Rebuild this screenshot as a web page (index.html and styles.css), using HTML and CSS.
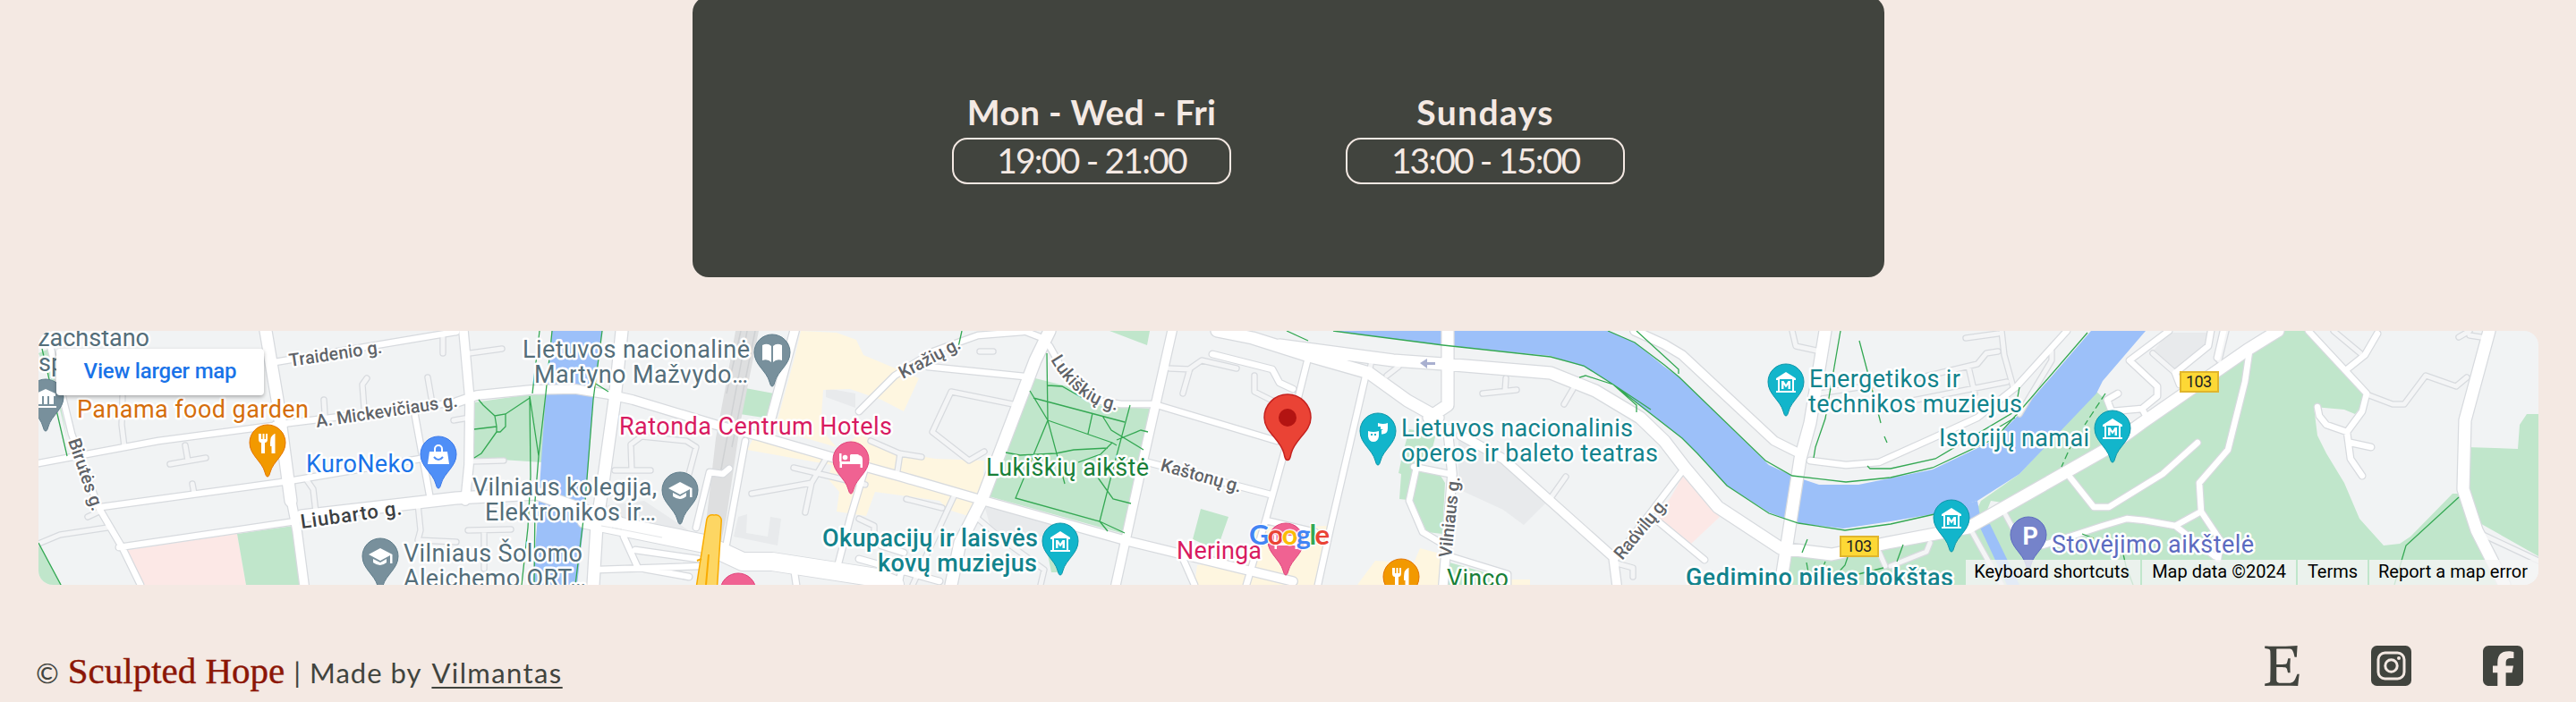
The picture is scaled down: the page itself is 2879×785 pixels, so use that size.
FILE: index.html
```html
<!DOCTYPE html>
<html lang="en">
<head>
<meta charset="utf-8">
<title>Sculpted Hope</title>
<link rel="stylesheet" href="styles.css">
</head>
<body>
<main class="page">
  <section class="hours">
    <div class="slot">
      <h3 class="slot-day day-week">Mon - Wed - Fri</h3>
      <p class="slot-time time-week">19:00 - 21:00</p>
    </div>
    <div class="slot">
      <h3 class="slot-day day-sun">Sundays</h3>
      <p class="slot-time time-sun">13:00 - 15:00</p>
    </div>
  </section>

  <section class="map">
    <svg class="map-canvas" viewBox="43 370 2794 284" width="2794" height="284">
      <defs>
        <path id="pin" d="M0 38C-1.6 38-2 36-3 33C-6 21-20 14-20 0A20 20 0 1 1 20 0C20 14 6 21 3 33C2 36 1.6 38 0 38Z"/>
        <g id="fork"><path d="M-10-10v6q0 4 3 4v12h4v-12q3 0 3-4v-6h-2v6h-1.500v-6h-2v6h-1.500v-6zM8-10q-5 2-5 10v4h1.500v8h4v-22z"/></g>
        <g id="cap"><path d="M0-9L-13-2L0 5L11-1V8h2.500V-2zM-8 3v4q8 6 15 0v-4l-7 4z"/></g>
        <g id="bed"><path d="M-13-7h2.500v9h21V-2q0-3-3-4h-8v6h-4h9v2h-17v-9v16h2.500v-4h20.500v4h2.500v-9q0-5-5-5h-9v7h-12z"/><circle cx="-6.500" cy="-2.500" r="2.800"/></g>
        <g id="museum"><path d="M-11-4L0-11L11-4v2h-2v12h2v2h-22v-2h2v-12h-2zM-7-3v13h14v-13z" fill-rule="evenodd"/><path d="M-5 8v-9h2.500l2.500 4l2.500-4h2.500v9h-2.500v-5l-2.500 3.500l-2.500-3.500v5z"/></g>
        <g id="w5">
          <path d="M137 443L136 475L139 500M207 498L210 515M190 519L230 512M215 541L217 552M410 423L405 430L407 457M362 447L363 463M478 422L482 445M495 377V395M343 537L350 547L353 573M467 563L470 593L467 604L510 606M43 608L67 598L120 590M98 578L113 571M525 395L561 390M507 470L525 467M527 516L563 515M523 593L571 592M541 593V636M706 526L705 497L717 488L767 493L778 500L770 530M687 526H727M840 552L907 540L923 513M907 540L900 573M887 523L967 542M1132 452L1063 438L1042 483L1083 515L1100 505M973 493L1005 507L1030 511M1006 507L1003 527M1013 558L1053 568M1067 553L1020 654M960 580L977 588V600M1093 580L1120 603L1167 637L1163 654M1382 412L1343 403L1330 412L1322 440M1307 412L1330 413M1402 420V438L1440 457M1530 417L1533 403L1560 403M1550 420L1563 410M1683 423L1682 437M1657 440L1695 436M1758 435L1748 452M1750 533L1733 557M1807 630L1825 635V645M2003 370L2007 387L2030 392M2197 378L2233 373M2237 370L2240 397L2250 433M2033 440L2143 423L2210 407L2220 395L2233 393M2200 410L2207 440M2127 450L2243 427M2293 393V403L2257 463M2113 633L2153 617L2157 607M2100 617L2107 633M2240 573L2253 597M2203 593L2237 654M2406 395L2431 417M2488 370L2480 403M2645 441L2674 452H2687L2711 420L2745 432L2757 422M2773 597L2837 627M2608 370L2638 395M2748 377L2760 370M2760 375L2773 377M1095 393H1110"/>
        </g>
        <g id="w7">
          <path d="M307 405L510 371M307 475L510 450M43 518L177 493L320 474M113 567L323 538L470 513M133 612L330 583M463 460L480 553M52 370L80 485L110 567L137 613L157 654M833 493L812 608M778 590L793 528L808 530L815 524M669 637L784 633M720 636L770 645M697 600L712 633M710 615L780 625M967 523L950 580L937 630M960 460L1000 420L1043 393L1093 375L1143 371M1037 410L1145 421M1173 387L1193 423L1220 447L1253 452H1290L1427 493M1283 517L1420 553M1355 396L1422 413L1430 428L1445 435M1462 400L1437 500L1415 580L1393 654M1320 620L1335 654M1415 582L1470 595M1527 417L1487 590L1473 654M1580 522L1620 530M1583 523L1575 560L1590 595L1612 608M1620 622L1685 642V654M1880 527L1807 623M1853 583L1905 626M2023 515L2063 520L2100 517L2160 490L2210 467L2253 433L2310 370M2313 533L2340 567H2357L2417 530L2456 495M2283 610L2350 588L2377 580L2397 582L2431 588L2460 572L2458 540L2490 503L2509 427L2514 393M2460 572L2482 605L2479 625M2431 588L2475 622M2424 370L2380 403L2411 432V443L2394 457L2360 460L2355 447L2367 440M2471 370L2468 387L2431 417L2436 430M2580 370L2645 440L2640 460L2623 483L2600 475L2592 465L2590 455M2623 483L2627 513L2640 532M2627 495L2650 500M2623 413L2643 397L2657 373M2394 457L2400 468M1147 371L1170 380M2485 370L2478 400M960 625L1050 650M887 634L890 654M985 610L1010 618M1010 625L1005 650"/>
        </g>
        <g id="w9">
          <path d="M518 370L525 447L524 520L520 560M510 450L533 442L593 436L643 435L680 441L707 447L800 475L850 488L960 520L1007 533L1100 560L1260 605L1445 650M888 370L862 467M1310 370L1277 517L1247 654M323 547L332 593L340 654M1633 487L1680 513L1803 623L1807 654M1618 480L1623 530L1613 654M1827 370L1860 385L1880 397L1983 493L2007 505"/>
        </g>
        <g id="w13">
          <path d="M297 370L310 447L325 560M337 577L510 557L600 552L640 566L690 583M695 370L687 447L673 547L667 587L663 654M1173 370L1157 403L1097 560L1073 607L1063 654M1360 370L1400 378L1460 397L1530 417L1573 448L1607 467M1430 386L1557 403L1613 407L1733 417L1783 437L1833 467L1860 493L1883 523L1920 567L1990 613L2047 620L2110 607L2200 590L2353 503L2394 473L2512 391L2546 370M1618 370V453L1597 467M2040 370L2023 473L2012 513L1990 654M2782 370L2755 470L2753 547L2768 593L2799 654"/>
        </g>
        <path id="w18" d="M655 581L787 608L830 628H863L980 646L1000 654"/>
      </defs>

      <rect class="land" x="43" y="370" width="2794" height="284"/>
      <g class="shade">
        <path d="M1630 490L1683 513L1733 557L1703 587L1680 570L1630 547Z"/>
        <path d="M2424 372H2470L2463 390L2431 415L2406 393ZM1100 565L1185 587L1165 600L1110 600ZM560 580L700 586L780 600L720 560Z"/>
        <path d="M923 434L956 440V456L923 444ZM825 578L835 575L834 596L858 600L861 578L873 580L869 610L820 600Z"/>
      </g>
      <g class="cream">
        <path d="M895 370L935 372L957 380L965 397L1027 423L1010 460L985 447L950 435L920 436L917 480L935 500L866 480L888 400Z"/>
        <path d="M842 490L900 500L933 510L960 485L1000 505L1045 513L1100 515L1097 560L1082 577L1060 570L1050 560L978 550L968 577L935 572L938 550L925 535L930 520L835 503Z"/>
        <path d="M1400 590L1484 588L1475 654H1335L1338 632L1410 620ZM1587 613L1613 620V654H1517L1537 627L1580 630Z"/>
        <path d="M1685 648H1710V654H1685Z"/>
      </g>
      <g class="pink">
        <path d="M137 616L265 597L275 654H158ZM1882 530L1922 578L1890 608L1853 578L1868 555Z"/>
      </g>
      <g class="green">
        <path d="M265 597L328 588L337 654H275ZM43 608L69 654H43ZM43 395L55 390L75 490L60 430Z"/>
        <path d="M530 450L593 441L611 440L606 517L530 512ZM833 434L865 440L860 468L827 463Z"/>
        <path d="M1157 423L1193 432L1223 453L1288 457L1260 598L1105 555Z"/>
        <path d="M1240 370H1285L1282 386ZM1342 569L1373 578L1360 615L1333 603ZM1170 615L1185 640L1175 640Z"/>
        <path d="M1575 480L1605 485L1600 505L1583 520L1573 559L1564 558L1566 530L1563 529L1567 510ZM1583 523L1607 527L1615 540L1612 597L1595 595L1578 560ZM1620 629L1670 643V654H1617Z"/>
        <path d="M2343 438L2357 450L2390 475L2546 370H2577L2648 443L2632 463L2620 458L2586 455L2590 487L2600 507L2620 540L2637 580L2664 610L2682 608L2694 600L2741 552H2752L2768 593L2799 654H1993L2000 622L2047 620L2110 607L2200 590L2214 560L2257 530Z"/>
        <path d="M2757 500L2814 502L2816 475L2824 463H2837V622L2768 583L2755 550Z"/>
      </g>
      <path class="land" d="M2213 590L2257 565L2225 560ZM2357 447L2366 463L2385 475L2400 465L2412 440L2390 410Z"/>
      <g class="water">
        <path d="M617 370H673L663 447L653 580L645 654H595L600 590L610 440Z"/>
        <path d="M1490 370L1613 386L1733 398L1770 410L1803 430L1880 490L1897 507L1930 543L1977 573L2010 585L2060 591L2113 583L2160 575L2210 560L2257 530L2343 440L2350 426L2398 370H2337L2253 467L2227 493L2160 525L2077 542H2033L2003 532L1977 520L1877 422L1860 410L1827 383L1797 370Z"/>
        <path d="M2190 565L2210 560L2213 577L2200 590ZM2212 588L2224 586L2257 654H2243Z"/>
      </g>
      <path class="rail" d="M822 370H848L828 470L812 577L802 625H784L792 560L800 490L810 437Z"/>
      <path class="rail-line" d="M835 370L805 530M844 370L818 500M828 370L812 440"/>

      <g class="casing">
        <use class="c5" href="#w5"/><use class="c7" href="#w7"/><use class="c9" href="#w9"/><use class="c13" href="#w13"/><use class="c18" href="#w18"/>
      </g>
      <g class="soft"><use class="f5" href="#w5"/></g>
      <g class="fill">
        <use class="f7" href="#w7"/><use class="f9" href="#w9"/><use class="f13" href="#w13"/><use class="f18" href="#w18"/>
      </g>
      <path class="fill-wide" d="M1358 370L1400 374L1460 389L1540 402L1480 404L1420 389Z"/>
      <path class="land-line" d="M684 590L740 601M672 588L695 592"/>
      <path class="tunnel-case" d="M796 582L784 660M800 582L795 660"/>
      <path class="tunnel" d="M796 582L784 660M800 582L795 660"/>
      <path class="tunnel-mark" d="M792 620L789 654M779 627L784 625"/>
      <path class="oneway" d="M1587 406L1595 401V405H1604V408H1595V412Z"/>

      <g class="trail">
        <path d="M47 390L75 510M43 607L68 654"/>
        <path d="M603 370L595 440M617 370L610 440L602 510L598 560L597 654M592 443L593 533L590 590L583 654M592 443L602 510M673 370L663 447L653 573L643 654"/>
        <path d="M535 447L540 453L553 465L565 463L592 445M553 465L555 477V483L559 483L565 477V463M530 480L555 477M555 483L538 507L530 512M664 428L680 438"/>
        <path d="M1075 370L1071 388M1170 395L1171 470L1135 557L1229 583L1257 596M1151 437L1171 470L1190 541M1155 445L1257 472M1171 431L1187 432L1210 445M1171 470L1243 495L1248 498M1263 453L1243 528L1229 583L1238 594M1221 462L1216 485M1232 465L1242 481L1278 503M1248 492L1275 481L1283 483M1124 506L1140 509L1180 507L1200 503L1238 501M1243 495L1230 508L1205 517M1227 534L1244 558L1264 563"/>
        <path d="M1438 370L1462 381M1490 370L1520 374L1613 386L1733 399L1770 409L1803 430L1880 490L1897 507L1930 543L1977 574L2010 585L2062 593L2113 586L2162 575M1765 422L1772 420L1803 430L1829 453V461M1803 430L1845 458M1797 370L1827 383L1860 408L1877 422L1973 515L2003 532L2063 539L2113 534L2160 523L2230 490L2257 460L2333 372M1829 370L1876 413V418"/>
        <path d="M2057 370L2040 468L2029 500L2027 512M2078 381L2087 415L2102 473M2106 488L2109 495M2257 433L2252 460L2163 513L2113 524H2090L2087 521M2225 483L2252 467M2020 603L2014 618M2019 629L2021 640M2065 623L2062 632L2050 645M2127 609L2120 628M2065 645L2105 635M2040 628L2035 640M2327 597L2340 602"/>
        <path d="M2748 556L2689 610L2676 654M2372 615L2376 633L2384 654"/>
        <path class="dash" d="M2353 440L2330 475M2316 495L2304 522"/>
      </g>

      <g class="shield">
        <rect x="2057" y="600" width="42" height="22"/><rect x="2437" y="416" width="42" height="22"/>
      </g>
      <text class="shield-text" x="2063" y="617" textLength="29">103</text>
      <text class="shield-text" x="2443" y="433" textLength="29">103</text>

      <g class="street">
        <text transform="translate(324 410) rotate(-8.500)" textLength="105">Traidenio g.</text>
        <text transform="translate(354 478) rotate(-8.500)" textLength="160">A. Mickevičiaus g.</text>
        <text class="street-main" transform="translate(337 591) rotate(-8)" textLength="114">Liubarto g.</text>
        <text transform="translate(76 493) rotate(71)" textLength="84">Birutės g.</text>
        <text transform="translate(1009 424) rotate(-28)" textLength="75">Kražių g.</text>
        <path id="lukiskiu" class="guide" d="M1174 402Q1208 460 1262 460"/>
        <text><textPath href="#lukiskiu" textLength="97">Lukiškių g.</textPath></text>
        <text transform="translate(1296 526) rotate(15.500)" textLength="93">Kaštonų g.</text>
        <text transform="translate(1622 624) rotate(-84)" textLength="91">Vilniaus g.</text>
        <text transform="translate(1813 627) rotate(-50.500)" textLength="82">Radvilų g.</text>
      </g>

      <g class="poi">
        <g class="slate">
          <text x="167" y="387" text-anchor="end">zachstano</text>
          <text x="43" y="415">sp</text>
          <text x="584" y="400" textLength="254">Lietuvos nacionalinė</text>
          <text x="597" y="428" textLength="239">Martyno Mažvydo…</text>
          <text x="528" y="554" textLength="206">Vilniaus kolegija,</text>
          <text x="542" y="582" textLength="191">Elektronikos ir…</text>
          <text x="451" y="628" textLength="200">Vilniaus Šolomo</text>
          <text x="451" y="656" textLength="204">Aleichemo ORT…</text>
        </g>
        <text class="orange" x="86" y="467" textLength="259">Panama food garden</text>
        <text class="blue" x="342" y="528" textLength="121">KuroNeko</text>
        <g class="rose">
          <text x="692" y="486" textLength="305">Ratonda Centrum Hotels</text>
          <text x="1315" y="625" textLength="95">Neringa</text>
        </g>
        <g class="forest">
          <text x="1102" y="532" textLength="182">Lukiškių aikštė</text>
          <text x="1617" y="656" textLength="69">Vinco</text>
        </g>
        <g class="teal">
          <text class="strong" x="919" y="611" textLength="241">Okupacijų ir laisvės</text>
          <text class="strong" x="981" y="639" textLength="178">kovų muziejus</text>
          <text x="1566" y="488" textLength="259">Lietuvos nacionalinis</text>
          <text x="1566" y="516" textLength="287">operos ir baleto teatras</text>
          <text x="2022" y="433" textLength="169">Energetikos ir</text>
          <text x="2021" y="461" textLength="239">technikos muziejus</text>
          <text x="2167" y="499" textLength="168">Istorijų namai</text>
          <text class="strong" x="1884" y="655" textLength="299">Gedimino pilies bokštas</text>
        </g>
        <text class="indigo" x="2293" y="618" textLength="226">Stovėjimo aikštelė</text>
      </g>

      <g class="pins">
        <g transform="translate(51 444)"><use class="p-slate" href="#pin"/><path class="glyph" d="M-11-4L0-9L11-4V-1H9V8H4V-1H2V8H-2V-1H-4V8H-9V-1H-11ZM-12 10H12V12H-12Z"/></g>
        <g transform="translate(863 394)"><use class="p-slate" href="#pin"/><path class="glyph" d="M-11-8Q-5-11-1-7V11Q-5 7-11 9ZM11-8Q5-11 1-7V11Q5 7 11 9Z"/></g>
        <g transform="translate(760 548)"><use class="p-slate" href="#pin"/><use class="glyph" href="#cap"/></g>
        <g transform="translate(425 622)"><use class="p-slate" href="#pin"/><use class="glyph" href="#cap"/></g>
        <g transform="translate(299 495)"><use class="p-orange" href="#pin"/><use class="glyph" href="#fork"/></g>
        <g transform="translate(1566 645)"><use class="p-orange" href="#pin"/><use class="glyph" href="#fork"/></g>
        <g transform="translate(490 508)"><use class="p-blue" href="#pin"/><path class="glyph" d="M-10-3H10L12 11H-12Z"/><path class="glyph-line" d="M-4-3V-6A4 4 0 0 1 4-6V-3"/><path class="bag-smile" d="M-5 3Q0 9 5 3"/></g>
        <g transform="translate(951 514)"><use class="p-rose" href="#pin"/><use class="glyph" href="#bed"/></g>
        <g transform="translate(825 661)"><use class="p-rose" href="#pin"/></g>
        <g transform="translate(1437 605)"><use class="p-rose" href="#pin"/><use class="glyph" href="#bed"/></g>
        <g transform="translate(1185 605)"><use class="p-teal" href="#pin"/><use class="glyph" href="#museum"/></g>
        <g transform="translate(1996 427)"><use class="p-teal" href="#pin"/><use class="glyph" href="#museum"/></g>
        <g transform="translate(2361 479)"><use class="p-teal" href="#pin"/><use class="glyph" href="#museum"/></g>
        <g transform="translate(2181 579)"><use class="p-teal" href="#pin"/><use class="glyph" href="#museum"/></g>
        <g transform="translate(1540 482)"><use class="p-teal" href="#pin"/><path class="glyph" d="M0-9q6 2 11 0v6q0 7-7 6.500v-4.500l2-1h-3v-3h-3zM-11 0q6 2 12 0v6q-1 6-6 6t-6-6z"/><path class="mask-eyes" d="M-8 4h2M-4 4h2"/></g>
        <g transform="translate(2267 598)"><use class="p-indigo" href="#pin"/><text class="parking" x="-6.500" y="11">P</text></g>
      </g>
      <path class="marker" d="M1439 514.500C1436 514.500 1436 511 1435 507C1431 491 1413 483 1413 467A26 26 0 0 1 1465 467C1465 483 1447 491 1443 507C1442 511 1442 514.500 1439 514.500Z"/>
      <circle class="marker-dot" cx="1439" cy="467" r="10"/>
      <text class="brand" x="1396" y="609" textLength="90"><tspan class="g-blue">G</tspan><tspan class="g-red">o</tspan><tspan class="g-yellow">o</tspan><tspan class="g-blue">g</tspan><tspan class="g-green">l</tspan><tspan class="g-red">e</tspan></text>
    </svg>
    <a class="map-link">View larger map</a>
    <div class="map-legal">
      <span class="legal-keys">Keyboard shortcuts</span>
      <span class="legal-data">Map data ©2024</span>
      <span class="legal-terms">Terms</span>
      <span class="legal-report">Report a map error</span>
    </div>
  </section>

  <footer class="footer">
    <p class="credit"><span>©</span><span class="credit-brand">Sculpted Hope</span><span>|</span><span class="credit-made">Made by</span><a class="credit-link">Vilmantas</a></p>
    <nav class="social">
      <svg class="icon icon-etsy" viewBox="0 32 384 448"><path d="M384 348c-1.750 10.750-13.750 110-15.500 132-117.879-4.299-219.895-4.743-368.500 0v-25.500c45.457-8.948 60.627-8.019 61-35.250 1.793-72.322 3.524-244.143 0-322-1.029-28.460-12.130-26.765-61-36v-25.500c73.886 2.358 255.933 8.551 362.999-3.750-3.500 38.250-7.750 126.500-7.750 126.500H332C320.947 115.665 313.241 68 277.250 68h-137c-10.250 0-10.750 3.500-10.750 9.750V241.500c58 .5 88.500-2.500 88.500-2.500 29.770-.951 27.560-8.502 40.750-65.251h25.750c-4.407 101.351-3.910 61.829-1.750 160.250H257c-9.155-40.086-9.065-61.045-39.501-61.500 0 0-21.500-2-88-2v139c0 26 14.250 38.250 44.250 38.250H263c63.636 0 66.564-24.996 98.751-99.750H384z"/></svg>
      <svg class="icon" viewBox="0 0 45 45"><rect width="45" height="45" rx="6.500"/><rect class="cut" x="8" y="8" width="29" height="29" rx="7.500"/><circle class="cut" cx="22.500" cy="22.500" r="6.700"/><circle class="cut-dot" cx="31" cy="14" r="2"/></svg>
      <svg class="icon" viewBox="0 32 448 448"><path d="M64 32C28.700 32 0 60.700 0 96V416c0 35.300 28.700 64 64 64h98.200V334.200H109.400V256h52.800V222.300c0-87.100 39.400-127.500 125-127.500 16.200 0 44.200 3.200 55.700 6.400V172c-6-.6-16.500-1-29.600-1-42 0-58.200 15.900-58.200 57.200V256h83.600l-14.400 78.200H255V480H384c35.300 0 64-28.700 64-64V96c0-35.300-28.700-64-64-64z"/></svg>
    </nav>
  </footer>
</main>
</body>
</html>
```
FILE: styles.css
```css
* { box-sizing: border-box; }
body { margin: 0; background: #f4e9e3; color: #41443e; font-family: Lato, "Open Sans", sans-serif; overflow: hidden; }
.page { width: 2879px; height: 785px; display: flex; flex-direction: column; align-items: center; overflow: hidden; }

.hours { width: 1332px; height: 314px; margin: -4px 0 0 1px; flex: none; background: #41443e; border-radius: 18px; display: flex; justify-content: center; gap: 128px; padding-top: 102px; color: #f4e9e3; }
.slot { width: 312px; display: flex; flex-direction: column; align-items: center; }
.slot-day { margin: 0; height: 56px; font-size: 39px; line-height: 54px; font-weight: 700; white-space: nowrap; }
.slot-time { margin: 0; width: 312px; height: 52px; border: 2px solid #f4e9e3; border-radius: 17px; font-size: 39px; line-height: 46px; text-align: center; white-space: nowrap; }
.day-week { letter-spacing: 0.3px; }
.day-sun { letter-spacing: 1.4px; }
.time-week { letter-spacing: -1.8px; }
.time-sun { letter-spacing: -1.9px; }

.map { position: relative; flex: none; width: 2794px; height: 284px; margin: 60px 0 0 1px; border-radius: 16px; overflow: hidden; font-family: Roboto, sans-serif; }
.map-canvas { display: block; }
.map-link { position: absolute; left: 20px; top: 20px; width: 232px; height: 52px; background: #fff; border-radius: 4px; box-shadow: 0 2px 4px rgba(0,0,0,.3); color: #1a73e8; font-size: 24px; line-height: 51px; text-align: center; font-weight: 500; letter-spacing: -0.2px; }
.map-legal { position: absolute; right: 0; bottom: 0; width: 640px; height: 28px; display: flex; font-size: 20px; line-height: 26px; color: #000; white-space: nowrap; }
.map-legal span { background: rgba(245,245,245,.8); text-align: center; margin-left: 2px; }
.map-legal .legal-keys { width: 195px; margin-left: 0; padding-right: 3px; }
.legal-data { width: 172px; }
.legal-terms { width: 78px; }
.legal-report { flex: 1; padding-right: 2px; }

.land { fill: #f1f3f4; }
.shade { fill: #e8eaec; }
.cream { fill: #fef6e0; }
.pink { fill: #fce8e6; }
.green { fill: #c0e6cb; }
.water { fill: #9cc0f9; }
.rail { fill: #dedfe0; }
.rail-line { fill: none; stroke: #cfd1d3; stroke-width: 1.5; }
.casing, .soft, .fill { fill: none; stroke-linecap: round; stroke-linejoin: round; }
.casing { stroke: #d7dade; }
.soft { stroke: #f4f5f6; }
.fill { stroke: #fff; }
.fill-wide { fill: #fff; }
.land-line { fill: none; stroke: #e4e6e8; stroke-width: 1; }
.c5 { stroke-width: 7.5px; }
.c7 { stroke-width: 9px; }
.c9 { stroke-width: 12px; }
.c13 { stroke-width: 15.5px; }
.c18 { stroke-width: 22px; }
.f5 { stroke-width: 5px; }
.f7 { stroke-width: 6.5px; }
.f9 { stroke-width: 9.5px; }
.f13 { stroke-width: 13px; }
.f18 { stroke-width: 20px; }
.tunnel-case { fill: none; stroke: #f9ab00; stroke-width: 14; stroke-linecap: round; }
.tunnel { fill: none; stroke: #fdd663; stroke-width: 11; stroke-linecap: round; }
.tunnel-mark { stroke: #f9ab00; stroke-width: 2; }
.oneway { fill: #a9b0d0; }
.trail { fill: none; stroke: #34a853; stroke-width: 1.3; }
.dash { stroke-dasharray: 8 4; }
.shield { fill: #fdd835; stroke: #e0b52d; stroke-width: 2; }
.shield-text { font-size: 18px; fill: #222; }

.street, .poi { paint-order: stroke; stroke: #fff; stroke-linejoin: round; }
.street { font-size: 20px; font-weight: 500; fill: #5f6368; stroke-width: 4.500px; }
.street-main { font-size: 22px; fill: #3c4043; }
.guide { fill: none; stroke: none; }
.poi { font-size: 27px; stroke-width: 5px; }
.strong { font-weight: 500; }
.slate { fill: #546e7a; }
.orange { fill: #d56e0c; }
.blue { fill: #1a73e8; }
.rose { fill: #d81b60; }
.forest { fill: #188038; }
.teal { fill: #12838c; }
.indigo { fill: #5c6bc0; }
.p-slate { fill: #78909c; stroke: #607d8b; stroke-width: 1; }
.p-orange { fill: #f29900; stroke: #e37400; stroke-width: 1; }
.p-blue { fill: #4f8ff7; stroke: #3b78e7; stroke-width: 1; }
.p-rose { fill: #f06292; stroke: #e0457b; stroke-width: 1; }
.p-teal { fill: #12b5cb; stroke: #0e96a8; stroke-width: 1; }
.p-indigo { fill: #7583ca; stroke: #5c6bc0; stroke-width: 1; }
.glyph { fill: #fff; }
.glyph-line { fill: none; stroke: #fff; stroke-width: 2; }
.bag-smile { fill: none; stroke: #4f8ff7; stroke-width: 2; }
.mask-eyes { stroke: #12b5cb; stroke-width: 2; }
.parking { fill: #fff; font-size: 27px; font-weight: 700; }
.marker { fill: #ea4335; stroke: #c5221f; stroke-width: 1.5; }
.marker-dot { fill: #b31412; }
.brand { font-family: Lato, sans-serif; font-size: 31px; font-weight: 700; paint-order: stroke; stroke: rgba(255,255,255,.85); stroke-width: 3px; }
.g-blue { fill: #4285f4; }
.g-red { fill: #ea4335; }
.g-yellow { fill: #fbbc05; }
.g-green { fill: #34a853; }

.footer { width: 2794px; margin: 68px 0 0 1px; display: flex; justify-content: space-between; align-items: flex-start; }
.credit { margin: 1px 0 0 -3px; display: flex; align-items: baseline; font-size: 31px; line-height: 54px; white-space: nowrap; }
.credit-brand { font-family: "Liberation Serif", serif; font-size: 41px; color: #8c1606; margin: 0 10px; -webkit-text-stroke: .4px #8c1606; }
.credit-made { margin: 0 11px 0 10px; letter-spacing: 1px; }
.credit-link { text-decoration: underline; text-decoration-thickness: 2px; text-underline-offset: 4px; letter-spacing: 1.4px; }
.social { display: flex; gap: 80px; padding-right: 17px; }
.icon { width: 45px; height: 45px; fill: #41443e; }
.icon-etsy { width: 39px; }
.cut { fill: none; stroke: #f4e9e3; stroke-width: 3; }
.cut-dot { fill: #f4e9e3; }
```
